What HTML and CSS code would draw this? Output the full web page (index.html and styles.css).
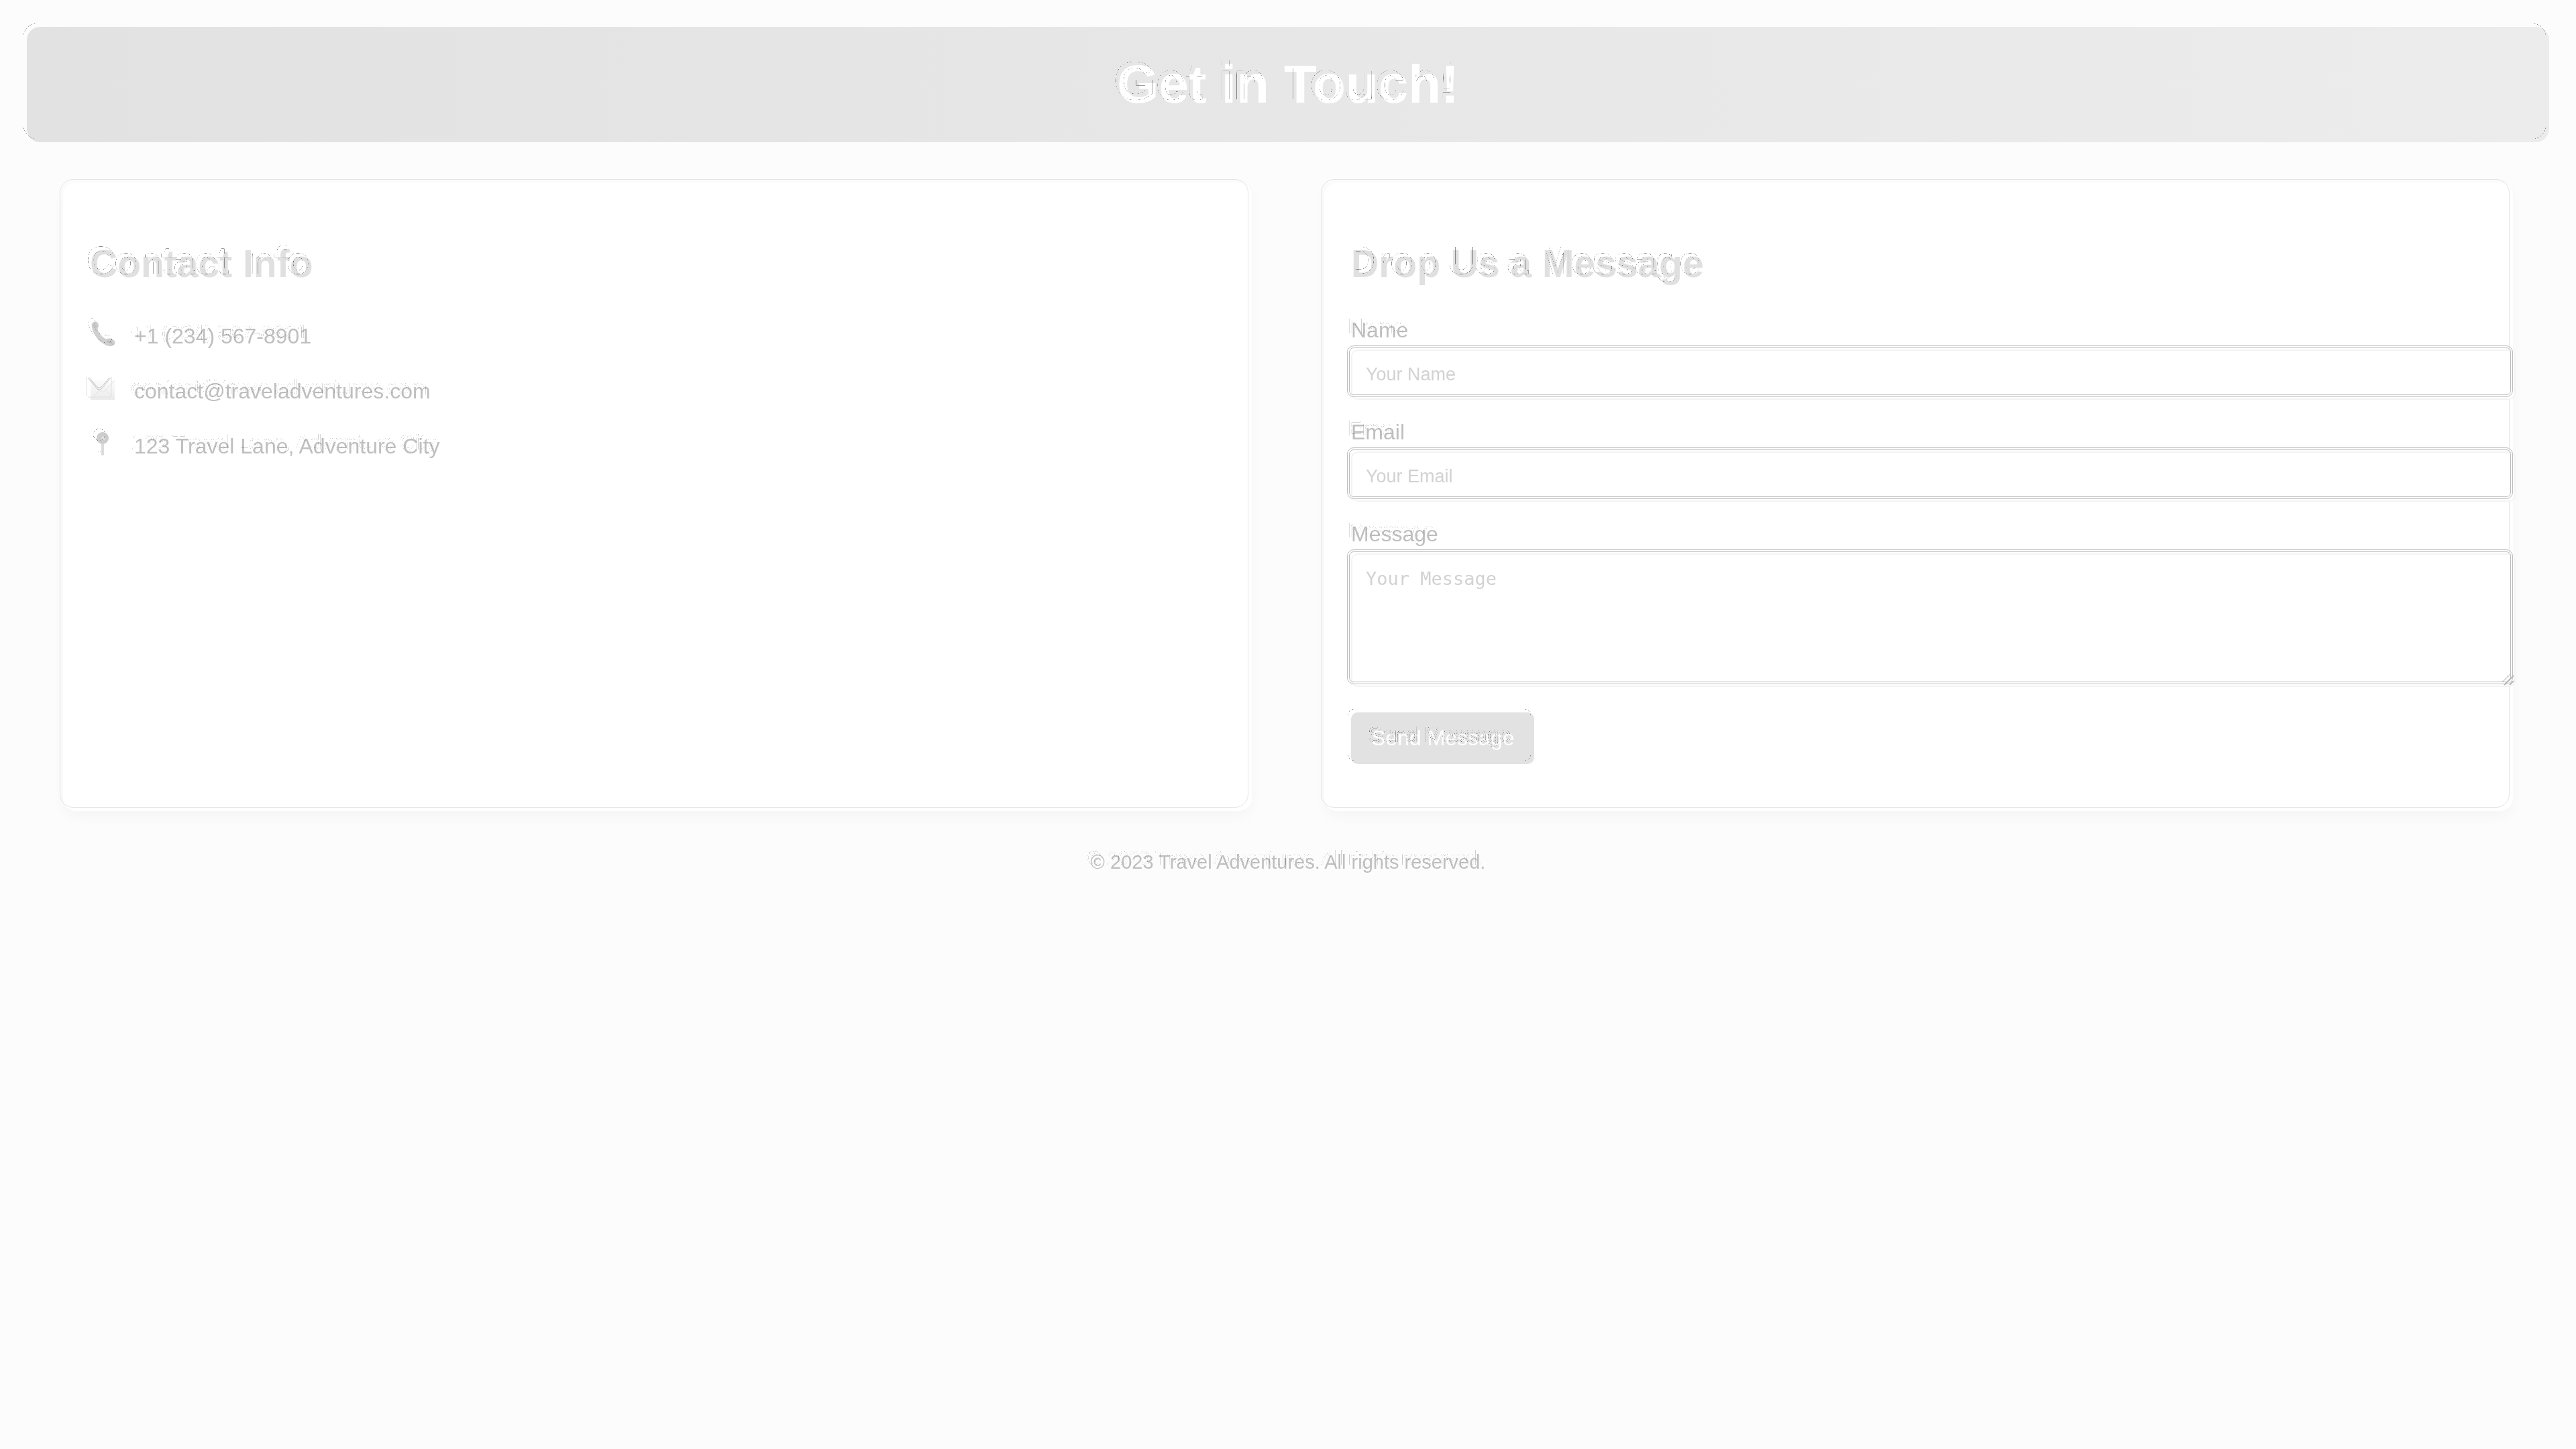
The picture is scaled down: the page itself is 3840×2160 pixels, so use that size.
FILE: index.html
```html
<!DOCTYPE html>
<html lang="en">
<head>
<meta charset="utf-8">
<title>Get in Touch</title>
<link rel="stylesheet" href="styles.css">
</head>
<body>
<svg class="defs" width="0" height="0" aria-hidden="true">
  <filter id="etch" x="-10" y="-10" width="4000" height="400" filterUnits="userSpaceOnUse" color-interpolation-filters="sRGB">
    <feComponentTransfer in="SourceAlpha" result="edge">
      <feFuncA type="table" tableValues="0 0 0.5 0 0"/>
    </feComponentTransfer>
    <feOffset in="edge" dx="-5" dy="-5" result="moved"/>
    <feMerge>
      <feMergeNode in="SourceGraphic"/>
      <feMergeNode in="moved"/>
    </feMerge>
  </filter>
  <filter id="etch-soft" x="-10" y="-10" width="4000" height="400" filterUnits="userSpaceOnUse" color-interpolation-filters="sRGB">
    <feComponentTransfer in="SourceAlpha" result="edge">
      <feFuncA type="table" tableValues="0 0 0.22 0 0"/>
    </feComponentTransfer>
    <feOffset in="edge" dx="-5" dy="-6" result="moved"/>
    <feMerge>
      <feMergeNode in="SourceGraphic"/>
      <feMergeNode in="moved"/>
    </feMerge>
  </filter>
  <linearGradient id="paper" x1="0" y1="0" x2="0" y2="1">
    <stop offset="0" stop-color="#fbfbfb"/>
    <stop offset="1" stop-color="#ececec"/>
  </linearGradient>
</svg>
<header class="banner"><h1 class="etched">Get in Touch!</h1></header>
<main class="columns">
  <section class="card">
    <h2 class="etched">Contact Info</h2>
    <ul class="contacts">
      <li>
        <svg class="icon etched" viewBox="0 0 40 54" aria-hidden="true"><path fill="#cfcfcf" d="M6 6C9 4 13 7 13 11C13 14 11 15 12 18C14 24 18 28 23 31C26 32 28 29 32 31C36 32 39 36 37 39C34 43 28 43 23 40C13 35 5 25 3 14C2 10 3 7 6 6Z"/><path fill="none" stroke="#bdbdbd" stroke-width="2" d="M5 10Q7 13 11 12M26 35Q31 34 34 40"/></svg>
        <span class="etched-soft">+1 (234) 567-8901</span>
      </li>
      <li>
        <svg class="icon" viewBox="0 0 40 54" aria-hidden="true"><path fill="url(#paper)" d="M1 11H37V40H1Z"/><path fill="none" stroke="#e2e2e2" d="M1 39L15 25M37 39L23 25M1 11L16 27Q19 30 22 27L37 11"/><path fill="none" stroke="#c4c4c4" d="M-3 7L11 24Q14 27 17 24L31 7M-1 7L11 21Q14 24 17 21L29 7"/><path fill="none" stroke="#e0e0e0" d="M-5 6V34M32 6V34M-3 36H31"/></svg>
        <span class="etched-soft">contact@traveladventures.com</span>
      </li>
      <li>
        <svg class="icon etched" viewBox="0 0 40 54" aria-hidden="true"><path fill="#dcdcdc" d="M17 20H21V40Q19 42 17 40Z"/><circle cx="19" cy="15" r="9" fill="#cdcdcd"/><circle cx="20" cy="15" r="3" fill="#dedede"/></svg>
        <span class="etched-soft">123 Travel Lane, Adventure City</span>
      </li>
    </ul>
  </section>
  <section class="card">
    <h2 class="etched">Drop Us a Message</h2>
    <form>
      <label class="etched-soft" for="name">Name</label>
      <div class="box"><input id="name" type="text" placeholder="Your Name"></div>
      <label class="etched-soft" for="email">Email</label>
      <div class="box"><input id="email" type="email" placeholder="Your Email"></div>
      <label class="etched-soft" for="message">Message</label>
      <div class="box area"><textarea id="message" placeholder="Your Message"></textarea>
        <svg class="grip" viewBox="0 0 20 20" aria-hidden="true"><path fill="none" stroke="#b5b5b5" stroke-width="2" d="M4 18L18 4M12 18L18 12"/><path fill="none" stroke="#999" stroke-dasharray="1 1" d="M1 13L12 2M2 14L13 3"/></svg>
      </div>
      <button type="submit"><span class="etched">Send Message</span></button>
    </form>
  </section>
</main>
<footer><p class="etched-soft">© 2023 Travel Adventures. All rights reserved.</p></footer>
</body>
</html>
```
FILE: styles.css
```css
body {
  margin: 0;
  padding: 40px;
  background: #fcfcfc;
  color: #bfbfbf;
  font-family: "Liberation Sans", Arial, sans-serif;
  font-size: 32px;
  line-height: 37px;
}

.defs {
  position: absolute;
}

.etched,
.banner,
button {
  filter: url(#etch);
}

.etched-soft {
  filter: url(#etch-soft);
}

.banner {
  padding: 40px;
  border-radius: 20px;
  background: linear-gradient(to right, #e2e2e2, #ececec);
  color: #fff;
  text-align: center;
}

h1 {
  margin: 0;
  font-size: 80px;
  line-height: 92px;
}

.columns {
  display: grid;
  grid-template-columns: 1fr 1fr;
  gap: 108px;
  margin: 60px 54px;
}

.card {
  position: relative;
  padding: 40px;
  border-radius: 20px;
  background: #fff;
  box-shadow: 0 8px 20px rgba(0, 0, 0, 0.03);
}

.card::before {
  content: "";
  position: absolute;
  inset: -5px 5px 5px -5px;
  border: 1px solid #e4e4e4;
  border-radius: 20px;
  pointer-events: none;
}

h2 {
  margin: 48px 0;
  color: #e0e0e0;
  font-size: 57px;
  line-height: 66px;
}

.contacts {
  margin: 0;
  padding: 0;
  list-style: none;
}

.contacts li {
  display: flex;
  gap: 26px;
  margin-bottom: 28px;
  line-height: 54px;
}

.icon {
  width: 40px;
  height: 54px;
  overflow: visible;
}

label {
  display: block;
}

.box {
  position: relative;
  margin: 10px -44px 30px 0;
}

.box::before {
  content: "";
  position: absolute;
  inset: -6px 4px 4px -6px;
  border: 4px double #bcbcbc;
  border-radius: 10px;
  pointer-events: none;
}

input,
textarea {
  display: block;
  box-sizing: border-box;
  width: 100%;
  margin: 0;
  padding: 20px;
  border: 2px solid #f3f3f3;
  border-radius: 10px;
  background: #fff;
  font-family: "Liberation Sans", Arial, sans-serif;
  font-size: 27px;
  line-height: 31px;
}

input {
  height: 75px;
}

textarea {
  height: 199px;
  font-family: "DejaVu Sans Mono", monospace;
  resize: none;
}

::placeholder {
  color: #d2d2d2;
  opacity: 1;
  filter: url(#etch-soft);
}

.box.area {
  margin-bottom: 38px;
}

.grip {
  position: absolute;
  right: 1px;
  bottom: 1px;
  width: 20px;
  height: 20px;
}

button {
  display: block;
  margin: 0 0 30px;
  padding: 20px 30px;
  border: 0;
  border-radius: 10px;
  background: #e2e2e2;
  color: #fff;
  font: inherit;
}

button span {
  display: block;
}

footer {
  font-size: 29px;
  line-height: 33px;
  text-align: center;
}

footer p {
  margin: 0;
}
```
